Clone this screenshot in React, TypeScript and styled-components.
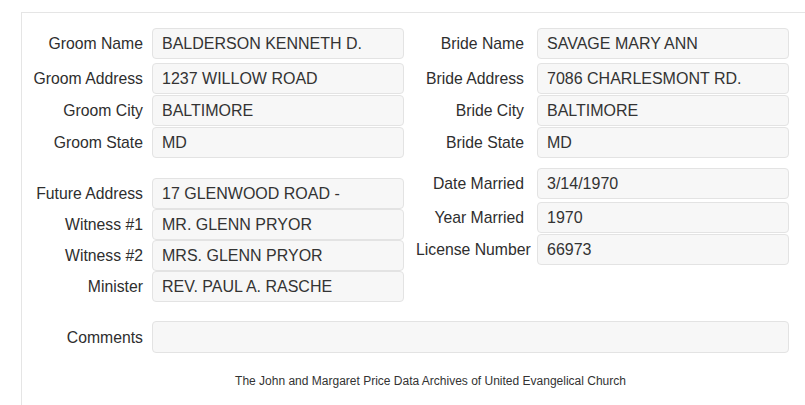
import React from "react";
import styled, { createGlobalStyle } from "styled-components";

const GlobalStyle = createGlobalStyle`
  html, body {
    margin: 0;
    padding: 0;
    overflow: hidden;
    background: #ffffff;
  }
  body {
    font-family: "Liberation Sans", Arial, sans-serif;
    color: #333333;
  }
`;

type Entry = { label: string; value: string };

const groom: Entry[] = [
    { label: "Groom Name", value: "BALDERSON KENNETH D." },
    { label: "Groom Address", value: "1237 WILLOW ROAD" },
    { label: "Groom City", value: "BALTIMORE" },
    { label: "Groom State", value: "MD" },
];

const bride: Entry[] = [
    { label: "Bride Name", value: "SAVAGE MARY ANN" },
    { label: "Bride Address", value: "7086 CHARLESMONT RD." },
    { label: "Bride City", value: "BALTIMORE" },
    { label: "Bride State", value: "MD" },
];

const ceremony: Entry[] = [
    { label: "Future Address", value: "17 GLENWOOD ROAD -" },
    { label: "Witness #1", value: "MR. GLENN PRYOR" },
    { label: "Witness #2", value: "MRS. GLENN PRYOR" },
    { label: "Minister", value: "REV. PAUL A. RASCHE" },
];

const license: Entry[] = [
    { label: "Date Married", value: "3/14/1970" },
    { label: "Year Married", value: "1970" },
    { label: "License Number", value: "66973" },
];

type ColumnProps = { $gap: number; $lead: number; $offset?: number; $indent?: number };
type RowProps = { $labelWidth: number; $spacing: number };

// left half: wide label cell; right half: narrower label cell pushed in a bit
const leftCol = { labelWidth: 121, spacing: 9 };
const rightCol = { labelWidth: 108, spacing: 13 };

const Field: React.FC<{ entry: Entry; labelWidth: number; spacing: number }> = ({ entry, labelWidth, spacing }) => (
    <Row $labelWidth={labelWidth} $spacing={spacing}>
        <Label>{entry.label}</Label>
        <Value>{entry.value}</Value>
    </Row>
);

const App: React.FC = () => {
    return (
        <>
            <GlobalStyle />
            <Panel>
                <Section>
                    <Column $gap={1} $lead={3}>
                        {groom.map((e) => <Field key={e.label} entry={e} {...leftCol} />)}
                    </Column>
                    <Column $gap={1} $lead={3} $indent={12}>
                        {bride.map((e) => <Field key={e.label} entry={e} {...rightCol} />)}
                    </Column>
                </Section>
                <Section $top={10}>
                    <Column $gap={0} $lead={0} $offset={10}>
                        {ceremony.map((e) => <Field key={e.label} entry={e} {...leftCol} />)}
                    </Column>
                    <Column $gap={1} $lead={2} $indent={12}>
                        {license.map((e) => <Field key={e.label} entry={e} {...rightCol} />)}
                    </Column>
                </Section>
                <CommentsRow>
                    <Label>Comments</Label>
                    <Value $tall />
                </CommentsRow>
                <Footer>The John and Margaret Price Data Archives of United Evangelical Church</Footer>
            </Panel>
        </>
    );
};

export default App;

const Panel = styled.div`
    margin: 12px 0 0 21px;
    width: 818px;
    box-sizing: border-box;
    border-top: 1px solid #e5e5e5;
    border-left: 1px solid #e5e5e5;
    padding: 15px 0 20px 0;
`;

const Section = styled.div<{ $top?: number }>`
    display: flex;
    align-items: flex-start;
    padding-top: ${(p) => p.$top || 0}px;
`;

const Column = styled.div<ColumnProps>`
    display: flex;
    flex-direction: column;
    gap: ${(p) => p.$gap}px;
    margin-top: ${(p) => p.$offset || 0}px;
    margin-left: ${(p) => p.$indent || 0}px;
    & > :first-child {
        margin-bottom: ${(p) => p.$lead}px;
    }
`;

const Row = styled.div<RowProps>`
    display: grid;
    grid-template-columns: ${(p) => p.$labelWidth}px 252px;
    column-gap: ${(p) => p.$spacing}px;
    align-items: center;
`;

const Label = styled.label`
    display: block;
    text-align: right;
    font-size: 15.75px;
    padding-top: 1px;
    color: #2e2e2e;
    white-space: nowrap;
`;

const Value = styled.div<{ $tall?: boolean }>`
    box-sizing: border-box;
    height: ${(p) => (p.$tall ? 32 : 31)}px;
    padding: 0 9px;
    display: flex;
    align-items: center;
    background: #f7f7f7;
    border: 1px solid #e3e3e3;
    border-radius: 4px;
    font-size: 16px;
    color: #333333;
    white-space: nowrap;
    overflow: hidden;
`;

const CommentsRow = styled.div`
    display: grid;
    grid-template-columns: 121px 637px;
    column-gap: 9px;
    align-items: center;
    margin-top: 19px;
`;

const Footer = styled.div`
    margin-top: 20px;
    text-align: center;
    font-size: 12px;
    line-height: 17px;
    color: #333333;
`;
